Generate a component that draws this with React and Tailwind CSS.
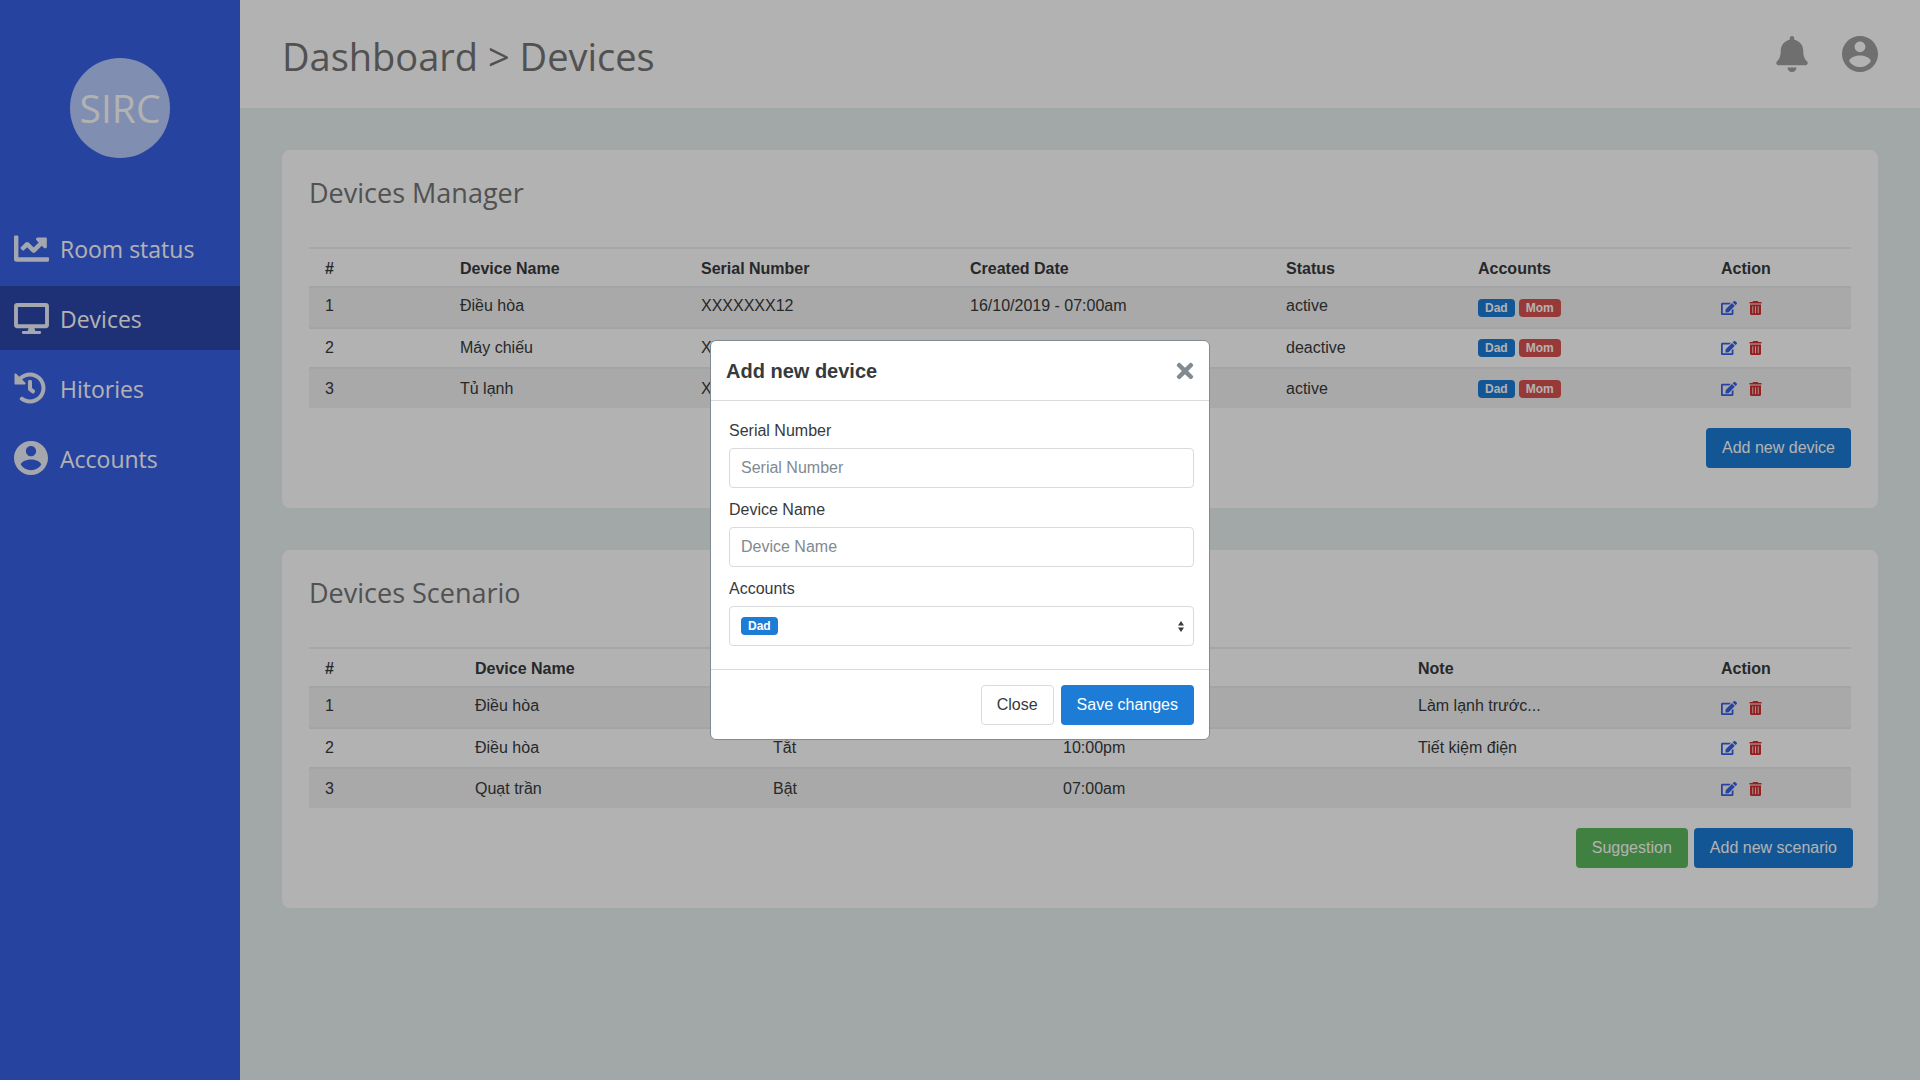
import React from "react";
import { FaBell, FaChartLine, FaDesktop, FaEdit, FaHistory, FaTimes } from "react-icons/fa";

const cx = (...names) => names.filter(Boolean).join(" ");

function AccountIcon({ className }) {
  return (
    <svg viewBox="2 2 20 20" fill="currentColor" className={className} aria-hidden="true">
      <path d="M12 2C6.48 2 2 6.48 2 12s4.48 10 10 10 10-4.48 10-10S17.52 2 12 2zm0 3c1.66 0 3 1.34 3 3s-1.34 3-3 3-3-1.34-3-3 1.34-3 3-3zm0 14.2c-2.5 0-4.71-1.28-6-3.22.03-1.99 4-3.08 6-3.08 1.99 0 5.97 1.09 6 3.08-1.29 1.94-3.5 3.22-6 3.22z" />
    </svg>
  );
}

function TrashIcon({ className }) {
  return (
    <svg viewBox="0 0 13 14" fill="currentColor" className={className} aria-hidden="true">
      <path
        fillRule="evenodd"
        d="M4.2 0h4.6l.6 1H12.500v1.600H.5V1h3.100zM1 3.4h11v9.400c0 .7-.5 1.200-1.200 1.200H2.200C1.500 14 1 13.500 1 12.800zM3.400 5.200v7h.8v-7zm2.700 0v7h.8v-7zm2.700 0v7h.8v-7z"
      />
    </svg>
  );
}

const menu = [
  { label: "Room status", icon: <FaChartLine className="size-[35px]" /> },
  { label: "Devices", icon: <FaDesktop className="h-[31px] w-[35px]" />, active: true },
  { label: "Hitories", icon: <FaHistory className="size-8" /> },
  { label: "Accounts", icon: <AccountIcon className="size-[34px]" /> },
];

function Sidebar() {
  return (
    <aside className="flex w-60 shrink-0 flex-col bg-[#3961e5]">
      <div className="mx-auto mt-[58px] flex size-[100px] items-center justify-center rounded-full bg-[#b7ccfe] text-[39px] text-white">
        SIRC
      </div>
      <nav className="mt-[58px] flex flex-col gap-1.5">
        {menu.map((item) => (
          <a
            key={item.label}
            href="#"
            className={cx("flex h-16 items-center pl-3.5 text-[23px] text-white", item.active && "bg-[#2b46a9]")}
          >
            <span className="flex w-[46px] items-center text-[#edf0fa]">{item.icon}</span>
            <span className="pt-0.5">{item.label}</span>
          </a>
        ))}
      </nav>
    </aside>
  );
}

function Badge({ children, red }) {
  return (
    <span
      className={cx(
        "inline-block h-[18px] rounded px-[7px] text-xs leading-[18px] font-bold text-white",
        red ? "bg-[#d9534f]" : "bg-[#1c7cd6]"
      )}
    >
      {children}
    </span>
  );
}

function Actions() {
  return (
    <div className="flex h-[18px] items-center gap-3">
      <button type="button" aria-label="Edit" className="text-[#3961e5]">
        <FaEdit className="size-4" />
      </button>
      <button type="button" aria-label="Delete" className="text-[#d32f2f]">
        <TrashIcon className="h-3.5 w-[13px]" />
      </button>
    </div>
  );
}

function Accounts() {
  return (
    <div className="flex gap-1">
      <Badge>Dad</Badge>
      <Badge red>Mom</Badge>
    </div>
  );
}

function DataTable({ columns, rows }) {
  return (
    <table className="w-full table-fixed border-collapse text-left text-base leading-5 text-[#373a3c]">
      <thead>
        <tr className="h-[39px] border-t-2 border-[#eceeef]">
          {columns.map((c) => (
            <th key={c.label} scope="col" className={cx("px-4 pt-0.5 font-bold", c.width)}>
              {c.label}
            </th>
          ))}
        </tr>
      </thead>
      <tbody>
        {rows.map((row, i) => (
          <tr
            key={i}
            className={cx("border-t-2 border-[#eaebec]", i === 0 ? "h-[41px]" : "h-10", i !== 1 && "bg-[#f2f2f2]")}
          >
            {row.map((cell, j) => (
              <td key={j} className={cx("px-4", i === 0 && typeof cell === "string" && "pb-1")}>
                {cell}
              </td>
            ))}
          </tr>
        ))}
      </tbody>
    </table>
  );
}

function Card({ title, children, footer }) {
  return (
    <section className="rounded-lg bg-white px-[27px] pt-[23px] pb-10">
      <h2 className="mb-[34px] text-[27px] leading-10 text-[#757575]">{title}</h2>
      <div className="font-['Liberation_Sans',Arial,sans-serif]">
        {children}
        {footer}
      </div>
    </section>
  );
}

function Button({ children, className }) {
  return (
    <button type="button" className={cx("h-10 rounded px-4 text-base whitespace-nowrap", className)}>
      {children}
    </button>
  );
}

const deviceColumns = [
  { label: "#", width: "w-[135px]" },
  { label: "Device Name", width: "w-[241px]" },
  { label: "Serial Number", width: "w-[269px]" },
  { label: "Created Date", width: "w-[316px]" },
  { label: "Status", width: "w-[192px]" },
  { label: "Accounts", width: "w-[243px]" },
  { label: "Action", width: "w-[146px]" },
];

const deviceRows = [
  ["1", "Điều hòa", "XXXXXXX12", "16/10/2019 - 07:00am", "active", <Accounts />, <Actions />],
  ["2", "Máy chiếu", "XXXXXXX12", "", "deactive", <Accounts />, <Actions />],
  ["3", "Tủ lạnh", "XXXXXXX12", "", "active", <Accounts />, <Actions />],
];

const scenarioColumns = [
  { label: "#", width: "w-[150px]" },
  { label: "Device Name", width: "w-[298px]" },
  { label: "Mode", width: "w-[290px]" },
  { label: "Time", width: "w-[355px]" },
  { label: "Note", width: "w-[303px]" },
  { label: "Action", width: "w-[146px]" },
];

const scenarioRows = [
  ["1", "Điều hòa", "Bật", "", "Làm lạnh trước...", <Actions />],
  ["2", "Điều hòa", "Tắt", "10:00pm", "Tiết kiệm điện", <Actions />],
  ["3", "Quạt trần", "Bật", "07:00am", "", <Actions />],
];

const fieldClass = "h-10 w-full rounded border border-[#d9dadb] bg-white px-[11px] text-base";

function Field({ id, label, children }) {
  return (
    <div className="flex flex-col gap-[5px]">
      <label htmlFor={id} className="leading-6">
        {label}
      </label>
      {children}
    </div>
  );
}

function AddDeviceDialog() {
  return (
    <div className="fixed inset-0 flex items-center justify-center bg-black/30 font-['Liberation_Sans',Arial,sans-serif] text-base text-[#373a3c]">
      <div
        role="dialog"
        aria-modal="true"
        aria-labelledby="dialog-title"
        className="w-[500px] rounded-md border border-[#818a91] bg-white"
      >
        <div className="flex h-15 items-center justify-between border-b border-[#d9dadb] pr-3 pl-[15px]">
          <h3 id="dialog-title" className="text-xl font-bold">
            Add new device
          </h3>
          <button type="button" aria-label="Dismiss" className="text-[#818a91]">
            <FaTimes className="size-6" />
          </button>
        </div>
        <form className="flex flex-col gap-2.5 pt-[18px] pr-[15px] pb-[23px] pl-[18px]">
          <Field id="serial" label="Serial Number">
            <input id="serial" placeholder="Serial Number" className={cx(fieldClass, "placeholder:text-[#818a91]")} />
          </Field>
          <Field id="name" label="Device Name">
            <input id="name" placeholder="Device Name" className={cx(fieldClass, "placeholder:text-[#818a91]")} />
          </Field>
          <Field id="accounts" label="Accounts">
            <div className="relative">
              <select id="accounts" className={cx(fieldClass, "block appearance-none text-transparent")}>
                <option value="dad" aria-label="Dad"></option>
                <option value="mom" aria-label="Mom"></option>
              </select>
              <div className="pointer-events-none absolute inset-0 flex items-center justify-between pr-2.5 pl-3">
                <Badge>Dad</Badge>
                <svg viewBox="0 0 6 11" className="h-[11px] w-1.5" fill="#373a3c" aria-hidden="true">
                  <path d="M0 4.500 3 0l3 4.500zM0 6.500h6L3 11z" />
                </svg>
              </div>
            </div>
          </Field>
        </form>
        <div className="flex justify-end gap-[7px] border-t border-[#d9dadb] px-[15px] pt-[15px] pb-3.5">
          <button type="button" className="h-10 rounded border border-[#d9dadb] bg-white px-[15px]">
            Close
          </button>
          <Button className="bg-[#1c7cd6] text-white">Save changes</Button>
        </div>
      </div>
    </div>
  );
}

export default function App() {
  return (
    <div className="flex min-h-screen bg-[#e9f0f1] font-['Open_Sans','Noto_Sans',sans-serif]">
      <Sidebar />
      <div className="min-w-0 flex-1">
        <header className="flex h-[108px] items-center justify-between bg-white px-[42px]">
          <h1 className="pt-1 text-[38px] text-[#757575]">Dashboard &gt; Devices</h1>
          <div className="flex items-center gap-[34px] text-[#9f9f9f]">
            <button type="button" aria-label="Notifications">
              <FaBell className="h-9 w-8" />
            </button>
            <button type="button" aria-label="Account">
              <AccountIcon className="size-9" />
            </button>
          </div>
        </header>
        <main className="flex flex-col gap-[42px] p-[42px]">
          <Card
            title="Devices Manager"
            footer={
              <div className="mt-5 flex justify-end">
                <Button className="bg-[#1c7cd6] text-white">Add new device</Button>
              </div>
            }
          >
            <DataTable columns={deviceColumns} rows={deviceRows} />
          </Card>
          <Card
            title="Devices Scenario"
            footer={
              <div className="mt-5 -mr-0.5 flex justify-end gap-1.5">
                <Button className="bg-[#5cb85c] text-white">Suggestion</Button>
                <Button className="bg-[#1c7cd6] text-white">Add new scenario</Button>
              </div>
            }
          >
            <DataTable columns={scenarioColumns} rows={scenarioRows} />
          </Card>
        </main>
      </div>
      <AddDeviceDialog />
    </div>
  );
}
